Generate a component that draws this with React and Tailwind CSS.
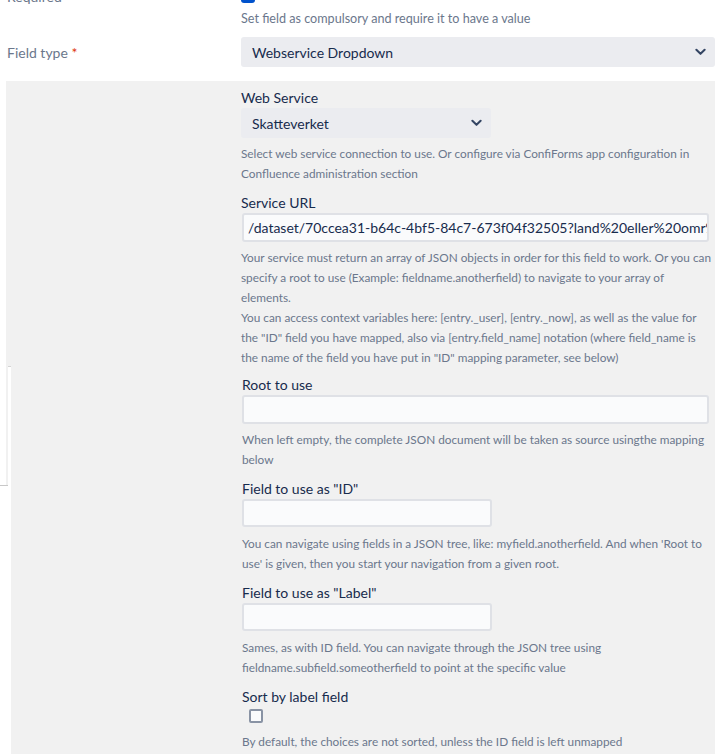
import React from 'react';

const font = "font-['Lato','Open_Sans',sans-serif]";

// chevron used by the selects
const Chevron = ({ className }) => (
  <svg viewBox="0 0 12 8" className={className} fill="none">
    <path d="M1.5 1.5 6 6l4.5-4.5" stroke="#344563" strokeWidth="2.2" strokeLinecap="round" strokeLinejoin="round" />
  </svg>
);

const Desc = ({ lines, className = '' }) => (
  <div className={`text-[11.8px] leading-[20px] text-[#6b778c] whitespace-nowrap ${className}`}>
    {lines.map((l, i) => (
      <div key={i}>{l}</div>
    ))}
  </div>
);

const Label = ({ children, className = '' }) => (
  <div className={`text-[14px] leading-[20px] text-[#172b4d] ${className}`}>{children}</div>
);

const Select = ({ value, className = '' }) => (
  <div className={`flex items-center justify-between bg-[#ebecf0] rounded-[3px] pl-[11px] pr-[9px] h-[30px] text-[14px] text-[#172b4d] ${className}`}>
    <span>{value}</span>
    <Chevron className="w-[11px] h-[8px]" />
  </div>
);

const TextInput = ({ value = '', className = '' }) => (
  <div className={`bg-[#fafbfc] border-2 border-[#dfe1e6] rounded-[3px] flex items-center px-[4px] text-[14px] text-[#172b4d] overflow-hidden whitespace-nowrap ${className}`}>
    {value}
  </div>
);

export default function App() {
  return (
    <div className={`relative w-[716px] h-[754px] overflow-hidden bg-white ${font}`}>
      {/* Required row (cut at top) */}
      <div className="flex -mt-[13px]">
        <div className="w-[241px] pl-[7px] text-[14px] leading-[20px] text-[#6b778c]">Required</div>
        <div>
          <div className="w-[14px] h-[16px] rounded-[3px] bg-[#0052cc]" />
          <Desc className="mt-[6px] text-[12.6px]" lines={['Set field as compulsory and require it to have a value']} />
        </div>
      </div>

      {/* Field type */}
      <div className="flex items-center mt-[8px]">
        <div className="w-[241px] pl-[7px] text-[14px] text-[#6b778c]">
          Field type <span className="text-[#de350b]">*</span>
        </div>
        <Select value="Webservice Dropdown" className="w-[474px] pr-[5px]" />
      </div>

      {/* Webservice settings panel */}
      <div className="ml-[6px] mr-[1px] mt-[14px] bg-[#f1f1f1] pl-[235px] pr-[6px] pt-[7px] h-[700px]">
        <Label>Web Service</Label>
        <Select value="Skatteverket" className="w-[250px] pr-[9px]" />
        <Desc
          className="mt-[6px]"
          lines={[
            'Select web service connection to use. Or configure via ConfiForms app configuration in',
            'Confluence administration section',
          ]}
        />

        <Label className="mt-[9px]">Service URL</Label>
        <TextInput
          className="ml-[1px] w-[467px] h-[29px]"
          value="/dataset/70ccea31-b64c-4bf5-84c7-673f04f32505?land%20eller%20omr%20"
        />
        <Desc
          className="mt-[6px]"
          lines={[
            'Your service must return an array of JSON objects in order for this field to work. Or you can',
            'specify a root to use (Example: fieldname.anotherfield) to navigate to your array of',
            'elements.',
            'You can access context variables here: [entry._user], [entry._now], as well as the value for',
            'the "ID" field you have mapped, also via [entry.field_name] notation (where field_name is',
            'the name of the field you have put in "ID" mapping parameter, see below)',
          ]}
        />

        <Label className="mt-[7px] ml-[1px]">Root to use</Label>
        <TextInput className="ml-[1px] w-[467px] h-[29px]" />
        <Desc
          className="mt-[6px] ml-[1px]"
          lines={['When left empty, the complete JSON document will be taken as source usingthe mapping', 'below']}
        />

        <Label className="mt-[9px] ml-[1px]">Field to use as "ID"</Label>
        <TextInput className="ml-[1px] w-[250px] h-[28px]" />
        <Desc
          className="mt-[7px] ml-[1px]"
          lines={[
            "You can navigate using fields in a JSON tree, like: myfield.anotherfield. And when 'Root to",
            "use' is given, then you start your navigation from a given root.",
          ]}
        />

        <Label className="mt-[9px] ml-[1px]">Field to use as "Label"</Label>
        <TextInput className="ml-[1px] w-[250px] h-[28px]" />
        <Desc
          className="mt-[7px] ml-[1px]"
          lines={[
            'Sames, as with ID field. You can navigate through the JSON tree using',
            'fieldname.subfield.someotherfield to point at the specific value',
          ]}
        />

        <Label className="mt-[9px] ml-[1px]">Sort by label field</Label>
        <div className="ml-[8px] mt-[2px] w-[14px] h-[14px] rounded-[2px] border-2 border-[#8993a4] bg-[#fafbfc]" />
        <Desc className="mt-[9px] ml-[1px]" lines={['By default, the choices are not sorted, unless the ID field is left unmapped']} />
      </div>

      {/* edge of the element lying under the panel */}
      <div className="absolute left-[8px] top-[366px] w-[3px] h-[388px] bg-white border-t border-[#d4d4d4]" />
      <div className="absolute left-[6px] top-[486px] w-[2px] h-[268px] bg-white" />
      <div className="absolute left-0 top-[485px] w-[8px] h-px bg-[#c8c8c8]" />
    </div>
  );
}
